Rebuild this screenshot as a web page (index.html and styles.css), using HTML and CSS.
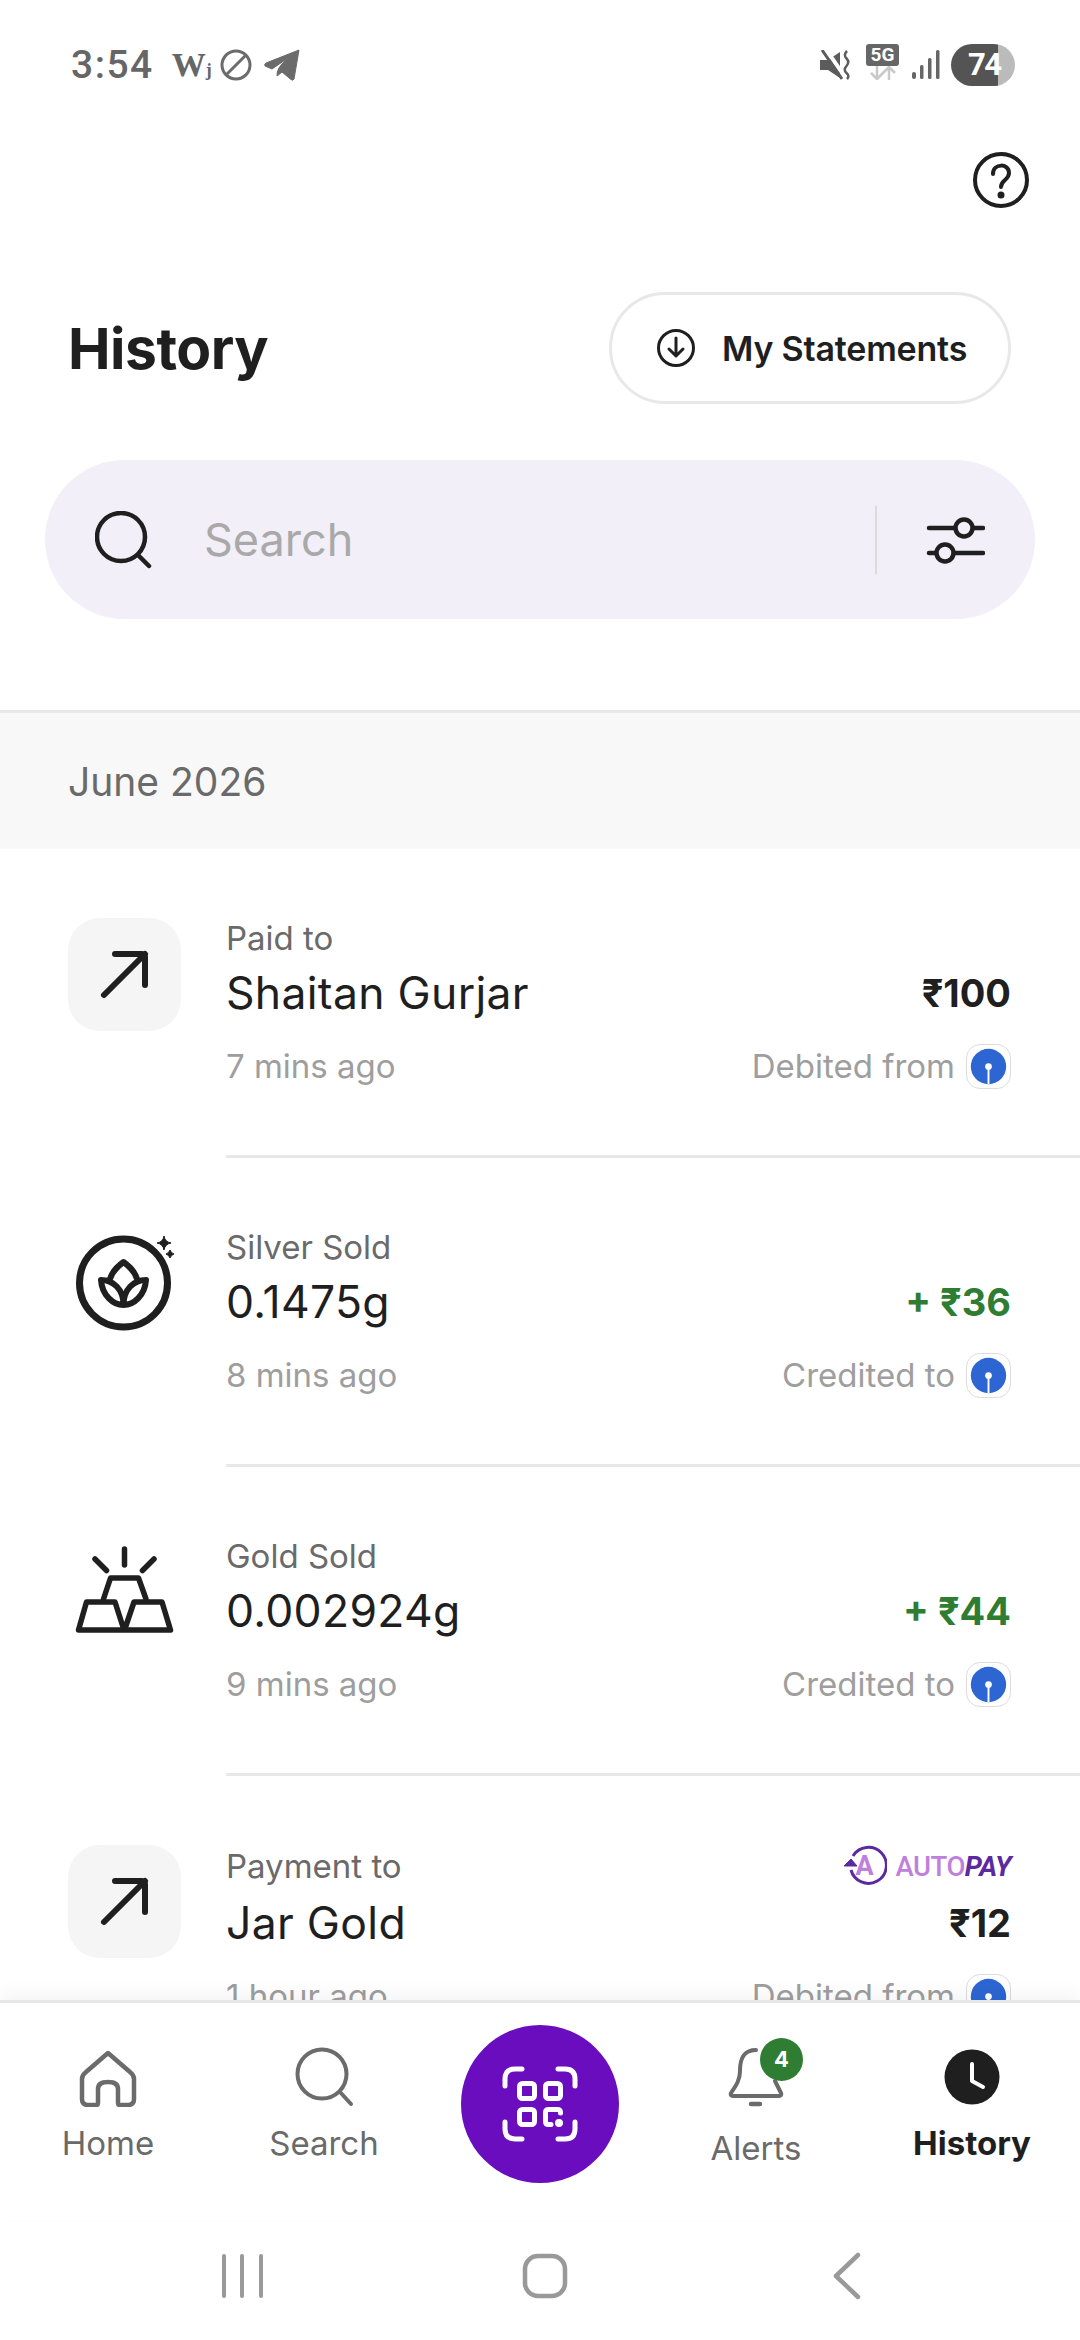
FILE: index.html
```html
<!DOCTYPE html>
<html lang="en">
<head>
    <meta charset="UTF-8">
    <meta name="viewport" content="width=device-width, initial-scale=1.0">
    <title>History</title>
    <link rel="stylesheet" href="styles.css">
</head>
<body>
    <svg class="defs" width="0" height="0">
        <symbol id="bank-sbi" viewBox="0 0 45 45">
            <circle cx="22.500" cy="22.500" r="18.500" fill="#2d66d2"/>
            <circle cx="22.500" cy="22.500" r="3.500" fill="#fff"/>
            <rect x="21.500" y="22.500" width="2" height="18.500" fill="#fff"/>
        </symbol>
        <symbol id="arrow-out" viewBox="0 0 113 113">
            <path d="M36 77L77 36M47 36H74Q77 36 77 39V67" fill="none" stroke="#1f1f1f" stroke-width="6" stroke-linecap="round"/>
        </symbol>
    </svg>

    <div class="page">
        <!-- Status bar -->
        <div class="status">
            <div class="status-left">
                <span class="status-time">3:54</span>
                <span class="status-w">W<small>j</small></span>
                <svg class="icon-block" width="32" height="32" viewBox="0 0 32 32" fill="none" stroke="#6b6b6b" stroke-width="3"><circle cx="16" cy="16" r="14"/><path d="M7 25L25 7"/></svg>
                <svg width="36" height="32" viewBox="0 0 36 32"><path d="M35 1L30 30Q29 32 27 30.500L18 23L13 27Q12 19 24 9L8 20L1 17Q0 15 2 14Z" fill="#6b6b6b" stroke="#6b6b6b" stroke-linejoin="round"/></svg>
            </div>
            <div class="status-right">
                <svg width="32" height="30" viewBox="0 0 32 30"><path d="M0 10H8L20 2V28L8 20H0Z" fill="#5c5c5c"/><path d="M5 -2L25 27" stroke="#fff" stroke-width="4"/><path d="M2 0L22 29" stroke="#5c5c5c" stroke-width="3"/><path d="M27 1Q23 5 26.500 8.500T26.500 16T26.500 23T27 29" fill="none" stroke="#5c5c5c" stroke-width="2.500"/></svg>
                <div class="status-net">
                    <span class="net-label">5G</span>
                    <svg width="30" height="14" viewBox="0 0 30 14" fill="none" stroke="#c9c9c9" stroke-width="2.500"><path d="M9 0V13M3 7L9 13L15 7M21 14V1M15 7L21 1L27 7"/></svg>
                </div>
                <svg class="icon-signal" width="28" height="30" viewBox="0 0 28 30" fill="#666"><rect x="0" y="22" width="4" height="7" rx="2"/><rect x="8" y="15" width="3.500" height="14" rx="1.500"/><rect x="16" y="8" width="3.500" height="21" rx="1.500"/><rect x="24" y="0" width="3.500" height="29" rx="1.500"/></svg>
                <div class="battery">74</div>
            </div>
        </div>

        <div class="help-row">
            <svg width="56" height="56" viewBox="0 0 56 56" fill="none" stroke="#1f1f1f" stroke-width="4" stroke-linecap="round"><circle cx="28" cy="28" r="26"/><path d="M20 22C20 11 36 11 36 21C36 28 28 28 28 35"/><circle cx="28" cy="43" r="1.500" fill="#1f1f1f"/></svg>
        </div>

        <div class="header">
            <h1 class="title">History</h1>
            <div class="btn-statements">
                <svg width="38" height="38" viewBox="0 0 38 38" fill="none" stroke="#1f1f1f" stroke-width="3" stroke-linecap="round" stroke-linejoin="round"><circle cx="19" cy="19" r="17.500"/><path d="M19 9V27M12 20L19 27L26 20"/></svg>
                <span>My Statements</span>
            </div>
        </div>

        <div class="searchbar">
            <svg width="58" height="58" viewBox="0 0 58 58" fill="none" stroke="#1f1f1f" stroke-width="4.500"><circle cx="26" cy="26" r="24"/><path d="M43 44L54 55" stroke-linecap="round"/></svg>
            <span class="search-placeholder">Search</span>
            <div class="search-divider"></div>
            <svg width="60" height="50" viewBox="0 0 60 50" fill="none" stroke="#1f1f1f" stroke-width="4.500" stroke-linecap="round"><path d="M4 13H30M48 13H58M4 38H11M29 38H58"/><circle cx="39" cy="13" r="8.500"/><circle cx="20" cy="38" r="8.500"/></svg>
        </div>

        <div class="month">June 2026</div>

        <div class="list">
            <div class="tx">
                <div class="tx-icon tx-icon-box"><svg width="113" height="113"><use href="#arrow-out"/></svg></div>
                <div class="tx-body">
                    <div class="tx-label">Paid to</div>
                    <div class="tx-side"></div>
                    <div class="tx-name">Shaitan Gurjar</div>
                    <div class="tx-amount">₹100</div>
                    <div class="tx-time">7 mins ago</div>
                    <div class="tx-bank">Debited from <span class="bank"><svg width="43" height="43"><use href="#bank-sbi"/></svg></span></div>
                </div>
            </div>

            <div class="tx">
                <div class="tx-icon">
                    <svg width="113" height="113" viewBox="0 0 113 113" fill="none" stroke="#1f1f1f">
                        <circle cx="55.500" cy="56" r="44" stroke-width="7"/>
                        <path d="M33 53C34 68 45 78 55.500 78C66 78 77 68 78 53C66 53 55.500 62 55.500 78C55.500 62 45 53 33 53ZM42 52C44 45 50 39 55.500 35C61 39 67 45 69 52" stroke-width="6" stroke-linejoin="round"/>
                        <path d="M96 9Q97 15 103 16Q97 17 96 23Q95 17 89 16Q95 15 96 9Z" fill="#1f1f1f" stroke-width="1"/>
                        <path d="M102 23Q103 26 106 27Q103 28 102 31Q101 28 98 27Q101 26 102 23Z" fill="#1f1f1f" stroke-width="1"/>
                    </svg>
                </div>
                <div class="tx-body">
                    <div class="tx-label">Silver Sold</div>
                    <div class="tx-side"></div>
                    <div class="tx-name">0.1475g</div>
                    <div class="tx-amount tx-credit">+ ₹36</div>
                    <div class="tx-time">8 mins ago</div>
                    <div class="tx-bank">Credited to <span class="bank"><svg width="43" height="43"><use href="#bank-sbi"/></svg></span></div>
                </div>
            </div>

            <div class="tx">
                <div class="tx-icon">
                    <svg width="113" height="113" viewBox="0 0 113 113" fill="none" stroke="#1f1f1f" stroke-width="5.500" stroke-linecap="round" stroke-linejoin="round">
                        <path d="M56.500 13V29M27 23L38.500 34.500M86 23L74.500 34.500"/>
                        <path d="M35.500 63L42.500 42H70.500L78 63"/>
                        <path d="M10.500 94L18.500 66H47L56 94ZM56.500 94L66 66H94L102.500 94Z"/>
                    </svg>
                </div>
                <div class="tx-body">
                    <div class="tx-label">Gold Sold</div>
                    <div class="tx-side"></div>
                    <div class="tx-name">0.002924g</div>
                    <div class="tx-amount tx-credit">+ ₹44</div>
                    <div class="tx-time">9 mins ago</div>
                    <div class="tx-bank">Credited to <span class="bank"><svg width="43" height="43"><use href="#bank-sbi"/></svg></span></div>
                </div>
            </div>

            <div class="tx tx-autopay">
                <div class="tx-icon tx-icon-box"><svg width="113" height="113"><use href="#arrow-out"/></svg></div>
                <div class="tx-body">
                    <div class="tx-label">Payment to</div>
                    <div class="tx-side autopay">
                        <span class="autopay-mark">
                            <svg width="44" height="44" viewBox="0 0 44 44" fill="none" stroke="#5b2a9f" stroke-width="3"><path d="M10 12A18 18 0 1 1 8 26"/><path d="M1 22L8 15L14 22Z" fill="#5b2a9f" stroke-width="1"/></svg>
                            <b>A</b>
                        </span>
                        <span class="autopay-text">AUTO<i>PAY</i></span>
                    </div>
                    <div class="tx-name">Jar Gold</div>
                    <div class="tx-amount">₹12</div>
                    <div class="tx-time">1 hour ago</div>
                    <div class="tx-bank">Debited from <span class="bank"><svg width="43" height="43"><use href="#bank-sbi"/></svg></span></div>
                </div>
            </div>
        </div>

        <div class="tabbar">
            <div class="tab">
                <svg width="60" height="60" viewBox="0 0 60 60" fill="none" stroke="#6b6b6b" stroke-width="4.500" stroke-linejoin="round"><path d="M30 6L52 25Q56 28 56 32V52Q56 58 50 58H42Q40 58 40 56V42Q40 35 30 35Q20 35 20 42V56Q20 58 18 58H10Q4 58 4 52V32Q4 28 8 25Z"/></svg>
                <span>Home</span>
            </div>
            <div class="tab">
                <svg width="60" height="60" viewBox="0 0 60 60" fill="none" stroke="#6b6b6b" stroke-width="4"><circle cx="28" cy="27" r="24.500"/><path d="M46 45L57 57" stroke-linecap="round"/></svg>
                <span>Search</span>
            </div>
            <div class="tab">
                <div class="scan">
                    <svg width="76" height="76" viewBox="0 0 76 76" fill="none" stroke="#fff" stroke-width="5" stroke-linecap="round" stroke-linejoin="round">
                        <path d="M20 3H13Q3 3 3 13V20M56 3H63Q73 3 73 13V20M3 56V63Q3 73 13 73H20M73 56V63Q73 73 63 73H56"/>
                        <rect x="17.500" y="17.500" width="15" height="15" rx="3"/>
                        <rect x="43.500" y="17.500" width="15" height="15" rx="3"/>
                        <rect x="17.500" y="43.500" width="15" height="15" rx="3"/>
                        <path d="M58.500 47V46.500Q58.500 43.500 55.500 43.500H46.500Q43.500 43.500 43.500 46.500V55.500Q43.500 58.500 46.500 58.500H49"/>
                        <circle cx="57" cy="57" r="1.500" fill="#fff"/>
                    </svg>
                </div>
            </div>
            <div class="tab tab-alerts">
                <div class="bell">
                    <svg width="60" height="60" viewBox="0 0 60 60" fill="none" stroke="#6b6b6b" stroke-width="4" stroke-linecap="round" stroke-linejoin="round"><path d="M30 3C15 3 14 16 14 24C14 34 9 40 5 46Q4 49 7 49H53Q56 49 55 46C53 42 51 38 49 34"/><path d="M25 57H34" stroke-width="4.500"/></svg>
                    <span class="badge">4</span>
                </div>
                <span>Alerts</span>
            </div>
            <div class="tab tab-active">
                <svg width="60" height="60" viewBox="0 0 60 60"><circle cx="30" cy="30" r="27.500" fill="#1f1f1f"/><path d="M30 17V34L41 40" fill="none" stroke="#fff" stroke-width="4" stroke-linecap="round" stroke-linejoin="round"/></svg>
                <span>History</span>
            </div>
        </div>

        <div class="sysnav">
            <svg width="44" height="46" viewBox="0 0 44 46" stroke="#999" stroke-width="4" stroke-linecap="round"><path d="M3 3V43M21 3V43M40 3V43"/></svg>
            <svg width="46" height="46" viewBox="0 0 46 46" fill="none" stroke="#999" stroke-width="4.500"><rect x="3" y="3" width="40" height="40" rx="13"/></svg>
            <svg width="30" height="48" viewBox="0 0 30 48" fill="none" stroke="#999" stroke-width="4.500" stroke-linecap="round" stroke-linejoin="round"><path d="M26 3L4 24L26 45"/></svg>
        </div>
    </div>
</body>
</html>
```

FILE: styles.css
```css
* {
    box-sizing: border-box;
}
body {
    margin: 0;
    background: #fff;
    font-family: Inter, "Noto Sans", sans-serif;
    color: #1f1f1f;
}
.defs {
    display: block;
    height: 0;
}
.page {
    width: 1080px;
    height: 2340px;
    display: flex;
    flex-direction: column;
    overflow: hidden;
}

/* status bar */
.status {
    height: 126px;
    flex: none;
    padding: 3px 65px 0 71px;
    display: flex;
    justify-content: space-between;
    align-items: center;
}
.status-left,
.status-right {
    display: flex;
    align-items: center;
}
.status-time {
    font-family: Roboto, sans-serif;
    font-size: 39px;
    font-weight: 500;
    color: #666;
    letter-spacing: 1.500px;
}
.status-w {
    font-family: "Liberation Serif", serif;
    font-weight: 700;
    font-size: 34px;
    color: #666;
    margin-left: 18px;
    width: 48px;
}
.status-w small {
    font-size: 18px;
}
.status-left svg + svg {
    margin-left: 12px;
}
.status-right svg {
    flex: none;
}
.status-net {
    display: flex;
    flex-direction: column;
    align-items: center;
    margin: -6px 0 0 14px;
}
.net-label {
    width: 33px;
    height: 22px;
    background: #666;
    border-radius: 3px;
    color: #fff;
    font-family: Roboto, sans-serif;
    font-weight: 700;
    font-size: 19px;
    line-height: 22px;
    text-align: center;
}
.icon-signal {
    margin-left: 13px;
}
.battery {
    width: 64px;
    height: 42px;
    margin-left: 11px;
    padding-left: 17px;
    border-radius: 21px;
    background: linear-gradient(90deg, #545454 73%, #bbb 73%);
    color: #fff;
    font-family: Roboto, sans-serif;
    font-weight: 700;
    font-size: 31px;
    letter-spacing: -1.500px;
    line-height: 42px;
}

.help-row {
    height: 108px;
    flex: none;
    padding-right: 51px;
    display: flex;
    justify-content: flex-end;
    align-items: center;
}

/* header */
.header {
    height: 112px;
    flex: none;
    margin-top: 58px;
    padding: 0 69px 0 68px;
    display: flex;
    justify-content: space-between;
    align-items: center;
}
.title {
    margin: 0;
    font-size: 57px;
    font-weight: 700;
    letter-spacing: -0.500px;
}
.btn-statements {
    width: 402px;
    height: 112px;
    padding-left: 45px;
    border: 3.500px solid #e8e8e8;
    border-radius: 56px;
    display: flex;
    align-items: center;
    gap: 27px;
    font-size: 34px;
    font-weight: 600;
    letter-spacing: -0.200px;
}

/* search */
.searchbar {
    height: 159px;
    flex: none;
    margin: 56px 45px 0;
    padding: 0 50px;
    border-radius: 80px;
    background: #f2eff8;
    display: flex;
    align-items: center;
}
.search-placeholder {
    margin-left: 51px;
    flex: 1;
    font-size: 45px;
    color: #a9a9a9;
}
.search-divider {
    width: 2px;
    height: 68px;
    margin-right: 48px;
    background: #dcdcdc;
}

.month {
    height: 139px;
    flex: none;
    margin-top: 91px;
    padding-left: 68px;
    border-top: 3px solid #e8e8e8;
    background: #f8f8f8;
    display: flex;
    align-items: center;
    font-size: 39px;
    color: #6a6a6a;
}

/* transactions */
.list {
    flex: 1;
    min-height: 0;
    overflow: hidden;
}
.tx {
    height: 309px;
    padding-left: 68px;
    display: flex;
}
.tx-icon {
    width: 113px;
    height: 113px;
    margin-top: 69px;
    flex: none;
}
.tx-icon-box {
    background: #f5f5f5;
    border-radius: 32px;
}
.tx-body {
    flex: 1;
    margin-left: 45px;
    padding: 69px 69px 0 0;
    border-bottom: 3px solid #e8e8e8;
    display: grid;
    grid-template-columns: 1fr auto;
    grid-template-rows: 40px 70px 76px;
    align-items: center;
}
.tx-autopay .tx-body {
    grid-template-rows: 42px 71px 76px;
}
.tx-label {
    font-size: 33px;
    color: #6a6a6a;
}
.tx-name {
    font-size: 44.500px;
    letter-spacing: 0.300px;
}
.tx-time {
    font-size: 33px;
    color: #9e9e9e;
}
.tx-amount {
    justify-self: end;
    font-size: 38px;
    font-weight: 700;
}
.tx-credit {
    color: #2e7d32;
}
.tx-bank {
    justify-self: end;
    display: flex;
    align-items: center;
    gap: 11px;
    font-size: 33px;
    color: #9e9e9e;
}
.bank {
    width: 45px;
    height: 45px;
    border: 1px solid #ddd;
    border-radius: 14px;
    display: block;
}
.bank svg {
    display: block;
}
.autopay {
    justify-self: end;
    display: flex;
    align-items: center;
    gap: 9px;
}
.autopay-mark {
    position: relative;
    width: 44px;
    height: 44px;
}
.autopay-mark b {
    position: absolute;
    inset: 0;
    text-align: center;
    line-height: 44px;
    font-family: Roboto, sans-serif;
    font-size: 27px;
    font-weight: 700;
    color: #bf7fdc;
}
.autopay-text {
    font-family: Roboto, sans-serif;
    font-size: 27.500px;
    font-weight: 500;
    color: #bf7fdc;
    letter-spacing: -0.500px;
}
.autopay-text i {
    color: #5b2a9f;
    font-weight: 700;
}

/* bottom tabs */
.tabbar {
    height: 220px;
    flex: none;
    position: relative;
    border-top: 3px solid #e6e6e6;
    background: #fff;
    box-shadow: 0 -8px 16px rgba(0, 0, 0, 0.04);
    display: grid;
    grid-template-columns: repeat(5, 1fr);
}
.tab {
    padding-top: 44px;
    display: flex;
    flex-direction: column;
    align-items: center;
    gap: 14px;
    font-size: 33px;
    line-height: 44px;
    color: #6a6a6a;
}
.tab svg {
    flex: none;
}
.tab-active {
    font-weight: 700;
    color: #1f1f1f;
}
.tab-alerts {
    gap: 19px;
}
.scan {
    width: 158px;
    height: 158px;
    margin-top: -22px;
    border-radius: 50%;
    background: #6a0dbf;
    display: flex;
    align-items: center;
    justify-content: center;
}
.bell {
    position: relative;
    width: 60px;
    height: 60px;
}
.badge {
    position: absolute;
    top: -9px;
    left: 34px;
    width: 43px;
    height: 43px;
    border-radius: 50%;
    background: #2e7d32;
    color: #fff;
    font-size: 22px;
    font-weight: 700;
    line-height: 43px;
    text-align: center;
}

.sysnav {
    height: 120px;
    flex: none;
    padding: 0 82px 8px 92px;
    display: grid;
    grid-template-columns: repeat(3, 302px);
    justify-items: center;
    align-items: center;
}
```
